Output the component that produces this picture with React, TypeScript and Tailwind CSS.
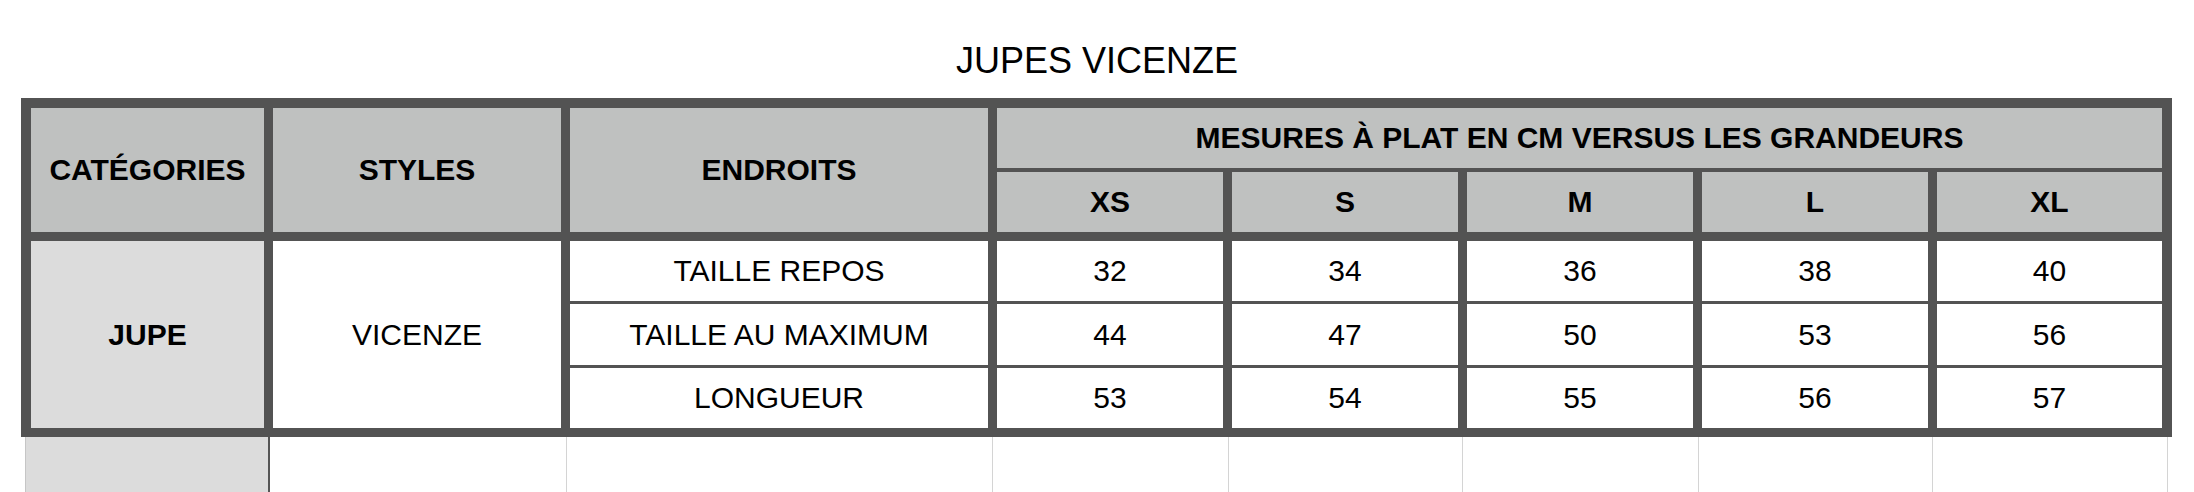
const SIZES = ["XS", "S", "M", "L", "XL"];

const ROWS = [
    { label: "TAILLE REPOS", values: [32, 34, 36, 38, 40] },
    { label: "TAILLE AU MAXIMUM", values: [44, 47, 50, 53, 56] },
    { label: "LONGUEUR", values: [53, 54, 55, 56, 57] },
];

const COLS = "grid-cols-[233px_288px_418px_226px_226px_226px_226px_225px]";

function HeadCell({ children, className = "" }: { children: React.ReactNode; className?: string }) {
    return (
        <div className={`flex items-center justify-center bg-[#bfc1c0] text-[30px] font-bold leading-none ${className}`}>
            {children}
        </div>
    );
}

function BodyCell({ children, className = "" }: { children: React.ReactNode; className?: string }) {
    return (
        <div className={`flex items-center justify-center bg-white text-[30px] leading-none ${className}`}>
            {children}
        </div>
    );
}

export default function App() {
    return (
        <div className="w-[2194px] h-[492px] overflow-hidden bg-white text-black font-['Liberation_Sans',Arial,sans-serif]">
            <h1 className="pt-[41px] text-center text-[36px] leading-[40px] font-normal">JUPES VICENZE</h1>

            <div className="ml-[21px] mt-[17px] w-[2151px] bg-[#535353] px-[10px] pt-[10px] pb-[9px]">
                {/* header */}
                <div className={`grid ${COLS} grid-rows-[60px_60px] gap-x-[9px] gap-y-[4px]`}>
                    <HeadCell className="row-span-2">CATÉGORIES</HeadCell>
                    <HeadCell className="row-span-2">STYLES</HeadCell>
                    <HeadCell className="row-span-2">ENDROITS</HeadCell>
                    <HeadCell className="col-span-5">MESURES À PLAT EN CM VERSUS LES GRANDEURS</HeadCell>
                    {SIZES.map((s) => (
                        <HeadCell key={s}>{s}</HeadCell>
                    ))}
                </div>

                {/* body */}
                <div className={`mt-[9px] grid ${COLS} grid-rows-[60px_61px_60px] gap-x-[9px] gap-y-[3px]`}>
                    <div className="row-span-3 flex items-center justify-center bg-[#dcdcdc] text-[30px] font-bold leading-none">
                        JUPE
                    </div>
                    <BodyCell className="row-span-3">VICENZE</BodyCell>
                    {ROWS.map((row, i) => (
                        <div key={row.label} className="contents">
                            <BodyCell className={i === 0 ? "col-start-3" : "col-start-3"}>{row.label}</BodyCell>
                            {row.values.map((v, j) => (
                                <BodyCell key={j}>{v}</BodyCell>
                            ))}
                        </div>
                    ))}
                </div>
            </div>

            {/* empty spreadsheet rows under the table */}
            <div className="ml-[25px] flex h-[55px]">
                <div className="w-[245px] bg-[#dcdcdc] border-l border-r-2 border-l-[#c6c6c6] border-r-[#555555]" />
                <div className="w-[297px] border-r border-[#d4d4d4]" />
                <div className="w-[426px] border-r border-[#d4d4d4]" />
                <div className="w-[236px] border-r border-[#d4d4d4]" />
                <div className="w-[234px] border-r border-[#d4d4d4]" />
                <div className="w-[236px] border-r border-[#d4d4d4]" />
                <div className="w-[234px] border-r border-[#d4d4d4]" />
                <div className="w-[235px] border-r border-[#d4d4d4]" />
            </div>
        </div>
    );
}
